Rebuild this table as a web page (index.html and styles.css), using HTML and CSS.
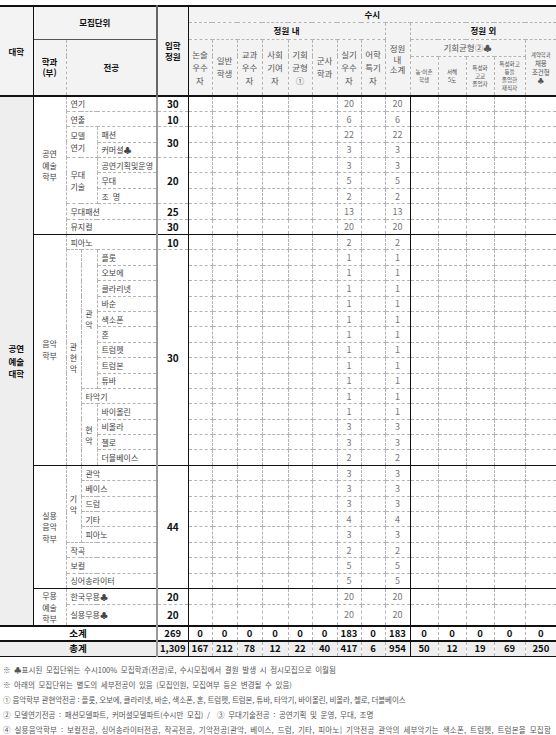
FILE: index.html
```html
<!DOCTYPE html>
<html lang="ko">
<head>
<meta charset="utf-8">
<title>모집단위별 모집인원</title>
<link rel="stylesheet" href="styles.css">
</head>
<body>
<div class="wrap">
<table class="admit">
<colgroup>
<col style="width:33px"><col style="width:33px"><col style="width:15px"><col style="width:16px"><col style="width:60px"><col style="width:31px">
<col style="width:24px"><col style="width:25px"><col style="width:25px"><col style="width:26px"><col style="width:24px"><col style="width:25px"><col style="width:24px"><col style="width:24px">
<col style="width:25px"><col style="width:28px"><col style="width:28px"><col style="width:28px"><col style="width:31px"><col style="width:31px">
</colgroup>
<thead>
<tr class="h1">
<th class="b uni-h" rowspan="4">대학</th>
<th class="b mj" colspan="4" rowspan="2">모집단위</th>
<th class="b qh" rowspan="4">입학<br>정원</th>
<th class="b" colspan="14">수시</th>
</tr>
<tr class="h2">
<th class="b" colspan="8">정원 내</th>
<th class="st lh10" rowspan="3">정원<br>내<br>소계</th>
<th class="b" colspan="5">정원 외</th>
</tr>
<tr class="h3">
<th class="b lh11" rowspan="2">학과<br>(부)</th>
<th class="b" colspan="3" rowspan="2">전공</th>
<th rowspan="2">논술<br>우수<br>자</th>
<th rowspan="2">일반<br>학생</th>
<th rowspan="2">교과<br>우수<br>자</th>
<th rowspan="2">사회<br>기여<br>자</th>
<th rowspan="2">기회<br>균형<br>①</th>
<th rowspan="2">군사<br>학과</th>
<th rowspan="2">실기<br>우수<br>자</th>
<th rowspan="2">어학<br>특기<br>자</th>
<th colspan="4">기회균형②♣</th>
<th class="xs2" rowspan="2"><span class="xxs">계약학과</span><br>채용<br>조건형<br>♣</th>
</tr>
<tr class="h4">
<th class="xs">농·어촌<br>학생</th>
<th class="xs">서해<br>5도</th>
<th class="xs">특성화<br>고교<br>졸업자</th>
<th class="xs">특성화고<br>등을<br>졸업한<br>재직자</th>
</tr>
</thead>
<tbody>
<tr>
<td class="uni" rowspan="34">공연<br>예술<br>대학</td>
<td class="dept" rowspan="9">공연<br>예술<br>학부</td>
<td class="l" colspan="3">연기</td><td class="q">30</td>
<td></td><td></td><td></td><td></td><td></td><td></td><td class="v">20</td><td></td><td class="v st">20</td><td></td><td></td><td></td><td></td><td></td>
</tr>
<tr>
<td class="l" colspan="3">연출</td><td class="q">10</td>
<td></td><td></td><td></td><td></td><td></td><td></td><td class="v">6</td><td></td><td class="v st">6</td><td></td><td></td><td></td><td></td><td></td>
</tr>
<tr>
<td class="l ml" colspan="2" rowspan="2">모델<br>연기</td><td class="l">패션</td><td class="q" rowspan="2">30</td>
<td></td><td></td><td></td><td></td><td></td><td></td><td class="v">22</td><td></td><td class="v st">22</td><td></td><td></td><td></td><td></td><td></td>
</tr>
<tr>
<td class="l">커머셜♣</td>
<td></td><td></td><td></td><td></td><td></td><td></td><td class="v">3</td><td></td><td class="v st">3</td><td></td><td></td><td></td><td></td><td></td>
</tr>
<tr>
<td class="l ml" colspan="2" rowspan="3">무대<br>기술</td><td class="l">공연기획및운영</td><td class="q" rowspan="3">20</td>
<td></td><td></td><td></td><td></td><td></td><td></td><td class="v">3</td><td></td><td class="v st">3</td><td></td><td></td><td></td><td></td><td></td>
</tr>
<tr>
<td class="l">무대</td>
<td></td><td></td><td></td><td></td><td></td><td></td><td class="v">5</td><td></td><td class="v st">5</td><td></td><td></td><td></td><td></td><td></td>
</tr>
<tr>
<td class="l"><span class="wide">조명</span></td>
<td></td><td></td><td></td><td></td><td></td><td></td><td class="v">2</td><td></td><td class="v st">2</td><td></td><td></td><td></td><td></td><td></td>
</tr>
<tr>
<td class="l" colspan="3">무대패션</td><td class="q">25</td>
<td></td><td></td><td></td><td></td><td></td><td></td><td class="v">13</td><td></td><td class="v st">13</td><td></td><td></td><td></td><td></td><td></td>
</tr>
<tr>
<td class="l" colspan="3">뮤지컬</td><td class="q">30</td>
<td></td><td></td><td></td><td></td><td></td><td></td><td class="v">20</td><td></td><td class="v st">20</td><td></td><td></td><td></td><td></td><td></td>
</tr>

<tr class="sep">
<td class="dept" rowspan="15">음악<br>학부</td>
<td class="l" colspan="3">피아노</td><td class="q">10</td>
<td></td><td></td><td></td><td></td><td></td><td></td><td class="v">2</td><td></td><td class="v st">2</td><td></td><td></td><td></td><td></td><td></td>
</tr>
<tr>
<td class="vt" rowspan="14">관<br>현<br>악</td>
<td class="vt" rowspan="9">관<br>악</td>
<td class="l">플룻</td><td class="q" rowspan="14">30</td>
<td></td><td></td><td></td><td></td><td></td><td></td><td class="v">1</td><td></td><td class="v st">1</td><td></td><td></td><td></td><td></td><td></td>
</tr>
<tr>
<td class="l">오보에</td>
<td></td><td></td><td></td><td></td><td></td><td></td><td class="v">1</td><td></td><td class="v st">1</td><td></td><td></td><td></td><td></td><td></td>
</tr>
<tr>
<td class="l">클라리넷</td>
<td></td><td></td><td></td><td></td><td></td><td></td><td class="v">1</td><td></td><td class="v st">1</td><td></td><td></td><td></td><td></td><td></td>
</tr>
<tr>
<td class="l">바순</td>
<td></td><td></td><td></td><td></td><td></td><td></td><td class="v">1</td><td></td><td class="v st">1</td><td></td><td></td><td></td><td></td><td></td>
</tr>
<tr>
<td class="l">색소폰</td>
<td></td><td></td><td></td><td></td><td></td><td></td><td class="v">1</td><td></td><td class="v st">1</td><td></td><td></td><td></td><td></td><td></td>
</tr>
<tr>
<td class="l">혼</td>
<td></td><td></td><td></td><td></td><td></td><td></td><td class="v">1</td><td></td><td class="v st">1</td><td></td><td></td><td></td><td></td><td></td>
</tr>
<tr>
<td class="l">트럼펫</td>
<td></td><td></td><td></td><td></td><td></td><td></td><td class="v">1</td><td></td><td class="v st">1</td><td></td><td></td><td></td><td></td><td></td>
</tr>
<tr>
<td class="l">트럼본</td>
<td></td><td></td><td></td><td></td><td></td><td></td><td class="v">1</td><td></td><td class="v st">1</td><td></td><td></td><td></td><td></td><td></td>
</tr>
<tr>
<td class="l">튜바</td>
<td></td><td></td><td></td><td></td><td></td><td></td><td class="v">1</td><td></td><td class="v st">1</td><td></td><td></td><td></td><td></td><td></td>
</tr>
<tr>
<td class="l" colspan="2">타악기</td>
<td></td><td></td><td></td><td></td><td></td><td></td><td class="v">1</td><td></td><td class="v st">1</td><td></td><td></td><td></td><td></td><td></td>
</tr>
<tr>
<td class="vt" rowspan="4">현<br>악</td>
<td class="l">바이올린</td>
<td></td><td></td><td></td><td></td><td></td><td></td><td class="v">1</td><td></td><td class="v st">1</td><td></td><td></td><td></td><td></td><td></td>
</tr>
<tr>
<td class="l">비올라</td>
<td></td><td></td><td></td><td></td><td></td><td></td><td class="v">3</td><td></td><td class="v st">3</td><td></td><td></td><td></td><td></td><td></td>
</tr>
<tr>
<td class="l">첼로</td>
<td></td><td></td><td></td><td></td><td></td><td></td><td class="v">3</td><td></td><td class="v st">3</td><td></td><td></td><td></td><td></td><td></td>
</tr>
<tr>
<td class="l">더블베이스</td>
<td></td><td></td><td></td><td></td><td></td><td></td><td class="v">2</td><td></td><td class="v st">2</td><td></td><td></td><td></td><td></td><td></td>
</tr>

<tr class="sep">
<td class="dept" rowspan="8">실용<br>음악<br>학부</td>
<td class="vt" rowspan="5">기<br>악</td>
<td class="l" colspan="2">관악</td><td class="q" rowspan="8">44</td>
<td></td><td></td><td></td><td></td><td></td><td></td><td class="v">3</td><td></td><td class="v st">3</td><td></td><td></td><td></td><td></td><td></td>
</tr>
<tr>
<td class="l" colspan="2">베이스</td>
<td></td><td></td><td></td><td></td><td></td><td></td><td class="v">3</td><td></td><td class="v st">3</td><td></td><td></td><td></td><td></td><td></td>
</tr>
<tr>
<td class="l" colspan="2">드럼</td>
<td></td><td></td><td></td><td></td><td></td><td></td><td class="v">3</td><td></td><td class="v st">3</td><td></td><td></td><td></td><td></td><td></td>
</tr>
<tr>
<td class="l" colspan="2">기타</td>
<td></td><td></td><td></td><td></td><td></td><td></td><td class="v">4</td><td></td><td class="v st">4</td><td></td><td></td><td></td><td></td><td></td>
</tr>
<tr>
<td class="l" colspan="2">피아노</td>
<td></td><td></td><td></td><td></td><td></td><td></td><td class="v">3</td><td></td><td class="v st">3</td><td></td><td></td><td></td><td></td><td></td>
</tr>
<tr>
<td class="l" colspan="3">작곡</td>
<td></td><td></td><td></td><td></td><td></td><td></td><td class="v">2</td><td></td><td class="v st">2</td><td></td><td></td><td></td><td></td><td></td>
</tr>
<tr>
<td class="l" colspan="3">보컬</td>
<td></td><td></td><td></td><td></td><td></td><td></td><td class="v">5</td><td></td><td class="v st">5</td><td></td><td></td><td></td><td></td><td></td>
</tr>
<tr>
<td class="l" colspan="3">싱어송라이터</td>
<td></td><td></td><td></td><td></td><td></td><td></td><td class="v">5</td><td></td><td class="v st">5</td><td></td><td></td><td></td><td></td><td></td>
</tr>

<tr class="sep">
<td class="dept dance" rowspan="2">무용<br>예술<br>학부</td>
<td class="l" colspan="3">한국무용♣</td><td class="q">20</td>
<td></td><td></td><td></td><td></td><td></td><td></td><td class="v">20</td><td></td><td class="v st">20</td><td></td><td></td><td></td><td></td><td></td>
</tr>
<tr class="tall">
<td class="l" colspan="3">실용무용♣</td><td class="q">20</td>
<td></td><td></td><td></td><td></td><td></td><td></td><td class="v">20</td><td></td><td class="v st">20</td><td></td><td></td><td></td><td></td><td></td>
</tr>

<tr class="sum">
<td class="lbl" colspan="5">소계</td><td class="q">269</td>
<td>0</td><td>0</td><td>0</td><td>0</td><td>0</td><td>0</td><td>183</td><td>0</td><td class="st">183</td><td>0</td><td>0</td><td>0</td><td>0</td><td>0</td>
</tr>
<tr class="total">
<td class="lbl" colspan="5">총계</td><td class="q">1,309</td>
<td>167</td><td>212</td><td>78</td><td>12</td><td>22</td><td>40</td><td>417</td><td>6</td><td class="st">954</td><td>50</td><td>12</td><td>19</td><td>69</td><td>250</td>
</tr>
</tbody>
</table>

<div class="notes">
<p>※ ♣표시된 모집단위는 수시100% 모집학과(전공)로, 수시모집에서 결원 발생 시 정시모집으로 이월됨</p>
<p>※ 아래의 모집단위는 별도의 세부전공이 있음 (모집인원, 모집여부 등은 변경될 수 있음)</p>
<p class="tight">① 음악학부 관현악전공 : 플룻, 오보에, 클라리넷, 바순, 색소폰, 혼, 트럼펫, 트럼본, 튜바, 타악기, 바이올린, 비올라, 첼로, 더블베이스</p>
<p>② 모델연기전공 : 패션모델파트, 커머셜모델파트(수시만 모집) / &nbsp;③ 무대기술전공 : 공연기획 및 운영, 무대, 조명</p>
<p class="loose">④ 실용음악학부 : 보컬전공, 싱어송라이터전공, 작곡전공, 기악전공[관악, 베이스, 드럼, 기타, 피아노] 기악전공 관악의 세부악기는 색소폰, 트럼펫, 트럼본을 모집함</p>
</div>
</div>
</body>
</html>
```

FILE: styles.css
```css
* { box-sizing: border-box; }

body {
  margin: 0;
  background: #fff;
  font-family: "Noto Sans CJK KR", "Noto Sans", "DejaVu Sans", sans-serif;
  color: #333;
}

.wrap {
  padding-top: 5px;
}

.admit {
  width: 556px;
  table-layout: fixed;
  border-collapse: collapse;
  border-top: 2px solid #111;
  border-left: hidden;
  border-right: hidden;
}

.admit th,
.admit td {
  padding: 0;
  border: 1px dashed #b4b4b4;
  text-align: center;
  vertical-align: middle;
  overflow: hidden;
  white-space: nowrap;
}

/* ---------- header ---------- */
.admit thead th {
  background: #f3f3f3;
  font-weight: normal;
  color: #555;
  font-size: 8.5px;
  line-height: 13px;
}

.admit thead th.b {
  font-weight: bold;
  color: #111;
  font-size: 8.5px;
  line-height: 11px;
}

.admit thead tr.h1 { height: 16px; }
.admit thead tr.h2 { height: 17px; }
.admit thead tr.h3 { height: 17px; }
.admit thead tr.h4 { height: 40px; }

.admit thead th.uni-h { border-right: 1px solid #111; }
.admit thead th.mj { border-bottom: 1px solid #555; }
.admit thead th.qh {
  border-left: 2px solid #666;
  border-right: 1px solid #111;
}
.admit thead th.lh10 { line-height: 10.5px; }
.admit thead th.lh11 { line-height: 11px; }

.admit thead th.xs {
  font-size: 5.6px;
  line-height: 8px;
  vertical-align: middle;
}

.admit thead th.xs2 {
  font-size: 6.5px;
  line-height: 8.5px;
}

.xxs { font-size: 5.4px; }

/* ---------- body ---------- */
.admit tbody td {
  font-size: 8px;
  line-height: 11px;
  color: #444;
}

.admit tbody tr { height: 15.4px; }
.admit tbody tr.tall { height: 20px; }
.admit tbody tr:first-child td { border-top: 2px solid #111; }
.admit tbody tr.sep td { border-top: 1px solid #111; }

.admit td.uni {
  background: #eeeeee;
  font-weight: bold;
  color: #111;
  font-size: 8.5px;
  line-height: 12.5px;
  border-right: 1px solid #111;
}

.admit td.dept { line-height: 11.5px; }
.admit td.dance { line-height: 11.5px; vertical-align: top; padding-top: 1px; }

.admit td.l {
  text-align: left;
  padding-left: 4px;
}

.admit td.ml { line-height: 12px; }

.admit td.vt { line-height: 11px; }

.wide { letter-spacing: 4px; }

.admit td.q {
  font-weight: bold;
  color: #111;
  font-size: 10px;
  border-left: 2px solid #9a9a9a;
  border-right: 1px solid #111;
}

.admit td.v {
  color: #777;
  font-size: 9px;
}

.admit td.st { border-right: 1px solid #111; }

/* ---------- totals ---------- */
.admit tr.sum { height: 15px; }
.admit tr.total { height: 16px; }

.admit tr.sum td,
.admit tr.total td {
  border-top: 2px solid #111;
  font-weight: bold;
  color: #111;
  font-size: 9.5px;
}

.admit tr.total td {
  background: #eeeeee;
  border-bottom: 1px solid #111;
}

.admit td.lbl { font-size: 9px; }

/* ---------- notes ---------- */
.notes {
  padding: 5px 0 0 3px;
  font-size: 7.5px;
  line-height: 15px;
  color: #555;
  white-space: nowrap;
}

.notes p {
  margin: 0;
  word-spacing: 1.5px;
}

.notes p.tight {
  word-spacing: 0;
  letter-spacing: -0.1px;
}

.notes p.loose {
  letter-spacing: 0.2px;
}
```
